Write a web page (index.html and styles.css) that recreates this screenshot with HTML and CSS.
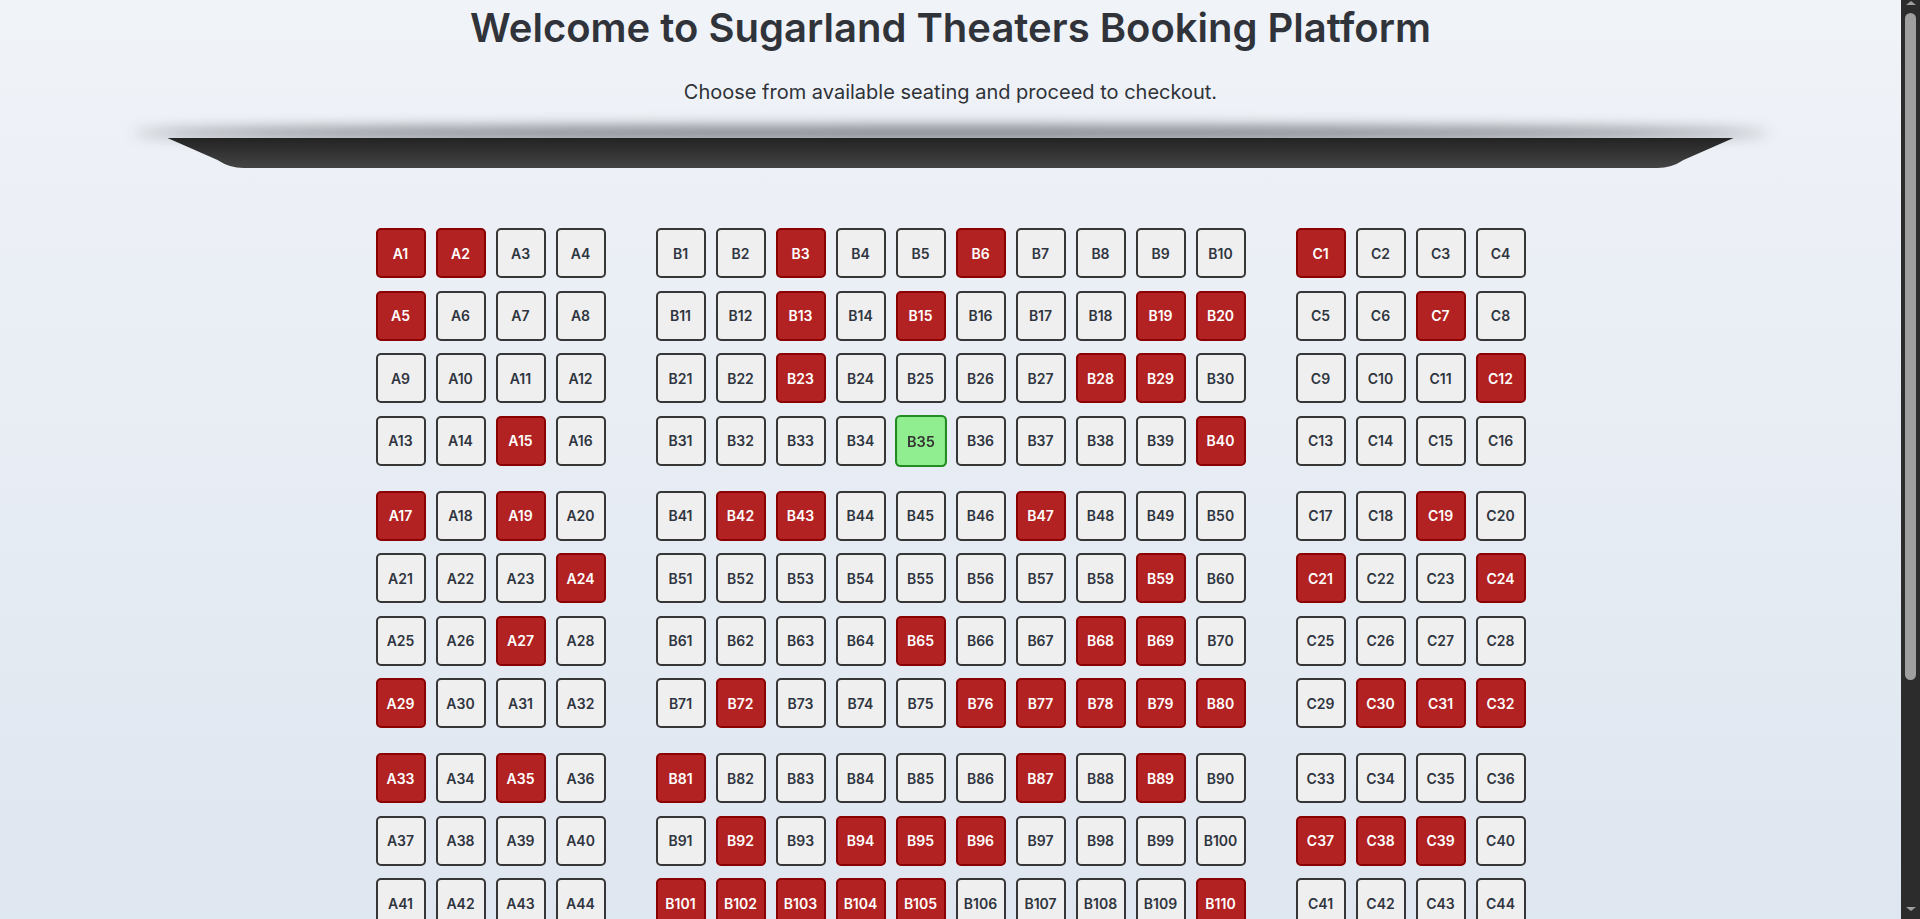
FILE: index.html
```html
<!DOCTYPE html>
<html lang="en">
<head>
<meta charset="utf-8">
<title>Sugarland Theaters Booking</title>
<link rel="stylesheet" href="styles.css">
</head>
<body>
<main class="page">
  <header class="header">
    <h1 class="title">Welcome to Sugarland Theaters Booking Platform</h1>
    <p class="subtitle">Choose from available seating and proceed to checkout.</p>
  </header>

  <div class="screen-wrap"><div class="screen"></div></div>

  <section class="seating">
    <div class="group">
      <div class="block block-4">
        <div class="seat reserved">A1</div><div class="seat reserved">A2</div><div class="seat">A3</div><div class="seat">A4</div>
        <div class="seat reserved">A5</div><div class="seat">A6</div><div class="seat">A7</div><div class="seat">A8</div>
        <div class="seat">A9</div><div class="seat">A10</div><div class="seat">A11</div><div class="seat">A12</div>
        <div class="seat">A13</div><div class="seat">A14</div><div class="seat reserved">A15</div><div class="seat">A16</div>
      </div>
      <div class="block block-10">
        <div class="seat">B1</div><div class="seat">B2</div><div class="seat reserved">B3</div><div class="seat">B4</div><div class="seat">B5</div><div class="seat reserved">B6</div><div class="seat">B7</div><div class="seat">B8</div><div class="seat">B9</div><div class="seat">B10</div>
        <div class="seat">B11</div><div class="seat">B12</div><div class="seat reserved">B13</div><div class="seat">B14</div><div class="seat reserved">B15</div><div class="seat">B16</div><div class="seat">B17</div><div class="seat">B18</div><div class="seat reserved">B19</div><div class="seat reserved">B20</div>
        <div class="seat">B21</div><div class="seat">B22</div><div class="seat reserved">B23</div><div class="seat">B24</div><div class="seat">B25</div><div class="seat">B26</div><div class="seat">B27</div><div class="seat reserved">B28</div><div class="seat reserved">B29</div><div class="seat">B30</div>
        <div class="seat">B31</div><div class="seat">B32</div><div class="seat">B33</div><div class="seat">B34</div><div class="seat selected">B35</div><div class="seat">B36</div><div class="seat">B37</div><div class="seat">B38</div><div class="seat">B39</div><div class="seat reserved">B40</div>
      </div>
      <div class="block block-4">
        <div class="seat reserved">C1</div><div class="seat">C2</div><div class="seat">C3</div><div class="seat">C4</div>
        <div class="seat">C5</div><div class="seat">C6</div><div class="seat reserved">C7</div><div class="seat">C8</div>
        <div class="seat">C9</div><div class="seat">C10</div><div class="seat">C11</div><div class="seat reserved">C12</div>
        <div class="seat">C13</div><div class="seat">C14</div><div class="seat">C15</div><div class="seat">C16</div>
      </div>
    </div>

    <div class="group">
      <div class="block block-4">
        <div class="seat reserved">A17</div><div class="seat">A18</div><div class="seat reserved">A19</div><div class="seat">A20</div>
        <div class="seat">A21</div><div class="seat">A22</div><div class="seat">A23</div><div class="seat reserved">A24</div>
        <div class="seat">A25</div><div class="seat">A26</div><div class="seat reserved">A27</div><div class="seat">A28</div>
        <div class="seat reserved">A29</div><div class="seat">A30</div><div class="seat">A31</div><div class="seat">A32</div>
      </div>
      <div class="block block-10">
        <div class="seat">B41</div><div class="seat reserved">B42</div><div class="seat reserved">B43</div><div class="seat">B44</div><div class="seat">B45</div><div class="seat">B46</div><div class="seat reserved">B47</div><div class="seat">B48</div><div class="seat">B49</div><div class="seat">B50</div>
        <div class="seat">B51</div><div class="seat">B52</div><div class="seat">B53</div><div class="seat">B54</div><div class="seat">B55</div><div class="seat">B56</div><div class="seat">B57</div><div class="seat">B58</div><div class="seat reserved">B59</div><div class="seat">B60</div>
        <div class="seat">B61</div><div class="seat">B62</div><div class="seat">B63</div><div class="seat">B64</div><div class="seat reserved">B65</div><div class="seat">B66</div><div class="seat">B67</div><div class="seat reserved">B68</div><div class="seat reserved">B69</div><div class="seat">B70</div>
        <div class="seat">B71</div><div class="seat reserved">B72</div><div class="seat">B73</div><div class="seat">B74</div><div class="seat">B75</div><div class="seat reserved">B76</div><div class="seat reserved">B77</div><div class="seat reserved">B78</div><div class="seat reserved">B79</div><div class="seat reserved">B80</div>
      </div>
      <div class="block block-4">
        <div class="seat">C17</div><div class="seat">C18</div><div class="seat reserved">C19</div><div class="seat">C20</div>
        <div class="seat reserved">C21</div><div class="seat">C22</div><div class="seat">C23</div><div class="seat reserved">C24</div>
        <div class="seat">C25</div><div class="seat">C26</div><div class="seat">C27</div><div class="seat">C28</div>
        <div class="seat">C29</div><div class="seat reserved">C30</div><div class="seat reserved">C31</div><div class="seat reserved">C32</div>
      </div>
    </div>

    <div class="group">
      <div class="block block-4">
        <div class="seat reserved">A33</div><div class="seat">A34</div><div class="seat reserved">A35</div><div class="seat">A36</div>
        <div class="seat">A37</div><div class="seat">A38</div><div class="seat">A39</div><div class="seat">A40</div>
        <div class="seat">A41</div><div class="seat">A42</div><div class="seat">A43</div><div class="seat">A44</div>
        <div class="seat">A45</div><div class="seat">A46</div><div class="seat">A47</div><div class="seat">A48</div>
      </div>
      <div class="block block-10">
        <div class="seat reserved">B81</div><div class="seat">B82</div><div class="seat">B83</div><div class="seat">B84</div><div class="seat">B85</div><div class="seat">B86</div><div class="seat reserved">B87</div><div class="seat">B88</div><div class="seat reserved">B89</div><div class="seat">B90</div>
        <div class="seat">B91</div><div class="seat reserved">B92</div><div class="seat">B93</div><div class="seat reserved">B94</div><div class="seat reserved">B95</div><div class="seat reserved">B96</div><div class="seat">B97</div><div class="seat">B98</div><div class="seat">B99</div><div class="seat">B100</div>
        <div class="seat reserved">B101</div><div class="seat reserved">B102</div><div class="seat reserved">B103</div><div class="seat reserved">B104</div><div class="seat reserved">B105</div><div class="seat">B106</div><div class="seat">B107</div><div class="seat">B108</div><div class="seat">B109</div><div class="seat reserved">B110</div>
        <div class="seat">B111</div><div class="seat">B112</div><div class="seat">B113</div><div class="seat">B114</div><div class="seat">B115</div><div class="seat">B116</div><div class="seat">B117</div><div class="seat">B118</div><div class="seat">B119</div><div class="seat">B120</div>
      </div>
      <div class="block block-4">
        <div class="seat">C33</div><div class="seat">C34</div><div class="seat">C35</div><div class="seat">C36</div>
        <div class="seat reserved">C37</div><div class="seat reserved">C38</div><div class="seat reserved">C39</div><div class="seat">C40</div>
        <div class="seat">C41</div><div class="seat">C42</div><div class="seat">C43</div><div class="seat">C44</div>
        <div class="seat">C45</div><div class="seat">C46</div><div class="seat">C47</div><div class="seat">C48</div>
      </div>
    </div>
  </section>
</main>

<div class="scrollbar" aria-hidden="true">
  <span class="sb-arrow sb-up"></span>
  <span class="sb-thumb"></span>
  <span class="sb-arrow sb-down"></span>
</div>
</body>
</html>
```

FILE: styles.css
```css
html {
  background: linear-gradient(180deg, #f0f3f8 0%, #d9e2ed 100%);
  min-height: 100%;
}

body {
  margin: 0;
  padding-right: 19px;
  font-family: Inter, "Noto Sans", "Liberation Sans", sans-serif;
  color: #31353a;
}

.page {
  padding-bottom: 227px;
}

.header {
  text-align: center;
}

.title {
  margin: 0;
  padding-top: 4px;
  font-size: 40px;
  line-height: 48px;
  font-weight: 600;
  color: #30343a;
}

.subtitle {
  margin: 28px 0 0;
  font-size: 20px;
  line-height: 24px;
  font-weight: 400;
  color: #2f3338;
}

.screen-wrap {
  position: relative;
  width: 1566px;
  height: 30px;
  margin: 34px auto 0;
}

.screen-wrap::before {
  content: "";
  position: absolute;
  left: -34px;
  right: -34px;
  top: -12px;
  height: 14px;
  border-radius: 50%;
  background: rgba(40, 44, 50, 0.6);
  filter: blur(7px);
}

.screen {
  position: relative;
  height: 30px;
  background: linear-gradient(180deg, #232323 0%, #444444 100%);
  clip-path: path('M0 0 H1566 L1516 22 Q1504 30 1490 30 H76 Q62 30 50 22 Z');
}

.seating {
  margin-top: 60px;
  display: flex;
  flex-direction: column;
  gap: 25px;
}

.group {
  display: flex;
  justify-content: center;
  gap: 50px;
}

.block {
  display: grid;
  column-gap: 10px;
  row-gap: 12.5px;
}

.block-4 {
  grid-template-columns: repeat(4, 50px);
}

.block-10 {
  grid-template-columns: repeat(10, 50px);
}

.seat {
  box-sizing: border-box;
  width: 50px;
  height: 50px;
  display: flex;
  align-items: center;
  justify-content: center;
  background: #efefef;
  border: 2px solid #363636;
  border-radius: 5px;
  font-size: 14px;
  font-weight: 600;
  color: #2f3540;
}

.seat.reserved {
  background: #b22222;
  border-color: #8b0000;
  color: #ffffff;
}

.seat.selected {
  background: #90ee90;
  border-color: #228b22;
  color: #333333;
  transform: scale(1.04);
}

/* overlay scrollbar drawn over the right edge of the viewport */
.scrollbar {
  position: fixed;
  top: 0;
  right: 0;
  width: 19px;
  height: 100vh;
  background: #2c2c2c;
  display: flex;
  flex-direction: column;
  align-items: center;
}

.sb-thumb {
  width: 11px;
  height: 667px;
  margin-top: 8px;
  border-radius: 6px;
  background: #9f9f9f;
}

.sb-arrow {
  width: 0;
  height: 0;
  border-left: 5px solid transparent;
  border-right: 5px solid transparent;
}

.sb-up {
  margin-top: 1px;
  border-bottom: 4px solid #9f9f9f;
}

.sb-down {
  margin-top: auto;
  margin-bottom: 8px;
  border-top: 4px solid #9f9f9f;
}
```
